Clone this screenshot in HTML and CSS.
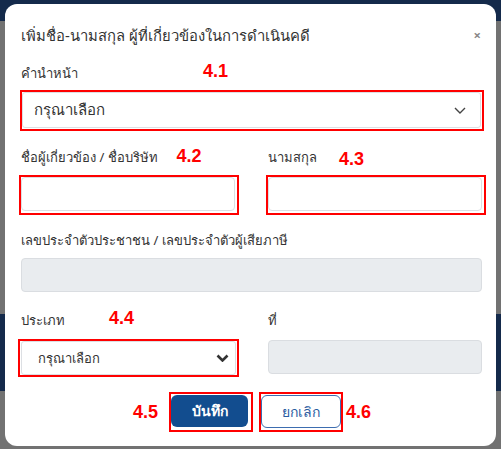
FILE: index.html
```html
<!DOCTYPE html>
<html lang="th">
<head>
<meta charset="utf-8">
<link rel="stylesheet" href="styles.css">
</head>
<body>
<div class="page">
  <div class="page-bar"></div>
  <div class="page-gap"></div>
  <div class="page-band"></div>
</div>
<div class="modal">
  <div class="modal-header">
    <h1 class="title">เพิ่มชื่อ-นามสกุล ผู้ที่เกี่ยวข้องในการดำเนินคดี</h1>
    <span class="close">×</span>
  </div>
  <div class="form">
    <div class="field">
      <div class="label-row"><span class="label">คำนำหน้า</span><span class="anno a41">4.1</span></div>
      <div class="mark mark-select-lg">
        <div class="select select-lg">
          <span>กรุณาเลือก</span>
          <svg class="chev-thin" width="12" height="7" viewBox="0 0 12 7"><path d="M1 1l5 5 5-5" fill="none" stroke="#444" stroke-width="1.4"/></svg>
        </div>
      </div>
    </div>
    <div class="row row-names">
      <div class="field">
        <div class="label-row"><span class="label">ชื่อผู้เกี่ยวข้อง / ชื่อบริษัท</span><span class="anno a42">4.2</span></div>
        <div class="mark mark-input"><div class="input"></div></div>
      </div>
      <div class="field">
        <div class="label-row"><span class="label">นามสกุล</span><span class="anno a43">4.3</span></div>
        <div class="mark mark-input"><div class="input"></div></div>
      </div>
    </div>
    <div class="field field-id">
      <div class="label-row"><span class="label">เลขประจำตัวประชาชน / เลขประจำตัวผู้เสียภาษี</span></div>
      <div class="input disabled id-input"></div>
    </div>
    <div class="row row-type">
      <div class="field">
        <div class="label-row"><span class="label">ประเภท</span><span class="anno a44">4.4</span></div>
        <div class="mark mark-select-sm">
          <div class="select select-sm">
            <span>กรุณาเลือก</span>
            <svg class="chev-bold" width="13" height="8" viewBox="0 0 13 8"><path d="M1.5 1.5l5 5 5-5" fill="none" stroke="#333" stroke-width="2.6"/></svg>
          </div>
        </div>
      </div>
      <div class="field">
        <div class="label-row"><span class="label">ที่</span></div>
        <div class="input disabled no-input"></div>
      </div>
    </div>
  </div>
  <div class="footer">
    <span class="anno a45">4.5</span>
    <span class="mark mark-save"><span class="btn btn-primary">บันทึก</span></span>
    <span class="mark mark-cancel"><span class="btn btn-outline">ยกเลิก</span></span>
    <span class="anno a46">4.6</span>
  </div>
</div>
</body>
</html>
```
FILE: styles.css
```css
* { box-sizing: border-box; }
html, body { margin: 0; padding: 0; }
body {
  width: 501px;
  height: 449px;
  overflow: hidden;
  background: #727272;
  font-family: "Noto Sans", "DejaVu Sans", sans-serif;
  color: #333;
}
.page { display: flex; flex-direction: column; }
.page-bar { height: 21px; background: #142a4b; }
.page-gap { height: 293px; }
.page-band { height: 77px; background: #142a4b; }

.modal {
  position: absolute;
  top: 4px;
  left: 5px;
  width: 491px;
  height: 442px;
  background: #fff;
  border-radius: 12px;
  padding: 0 14px 0 16px;
  display: flex;
  flex-direction: column;
}
.modal-header {
  display: flex;
  align-items: center;
  justify-content: space-between;
  height: 58px;
  padding-top: 4px;
}
.title {
  margin: 0;
  font-size: 14.8px;
  font-weight: 400;
  color: #333;
  line-height: 24px;
}
.close {
  font-size: 13px;
  font-weight: 700;
  color: #888;
  margin-right: 1px;
  line-height: 1;
}
.form { display: flex; flex-direction: column; }
.row {
  display: grid;
  grid-template-columns: 214px 214px;
  column-gap: 33px;
}
.field { display: flex; flex-direction: column; }
.label-row {
  display: flex;
  align-items: center;
  height: 22px;
}
.label { font-size: 13px; color: #333; }
.anno {
  font-family: "Liberation Sans", Arial, sans-serif;
  font-weight: 700;
  font-size: 18px;
  color: #f00;
  line-height: 1;
}
.a41 { margin-left: 125px; margin-top: -4px; }
.a42 { margin-left: 19px; margin-top: -2px; }
.a43 { margin-left: 22px; margin-top: 4px; }
.a44 { margin-left: 44px; margin-top: -4px; }

.mark { border: 2px solid #f00; display: flex; }

.mark-select-lg {
  margin: 6px -2px 0 -1px;
  padding: 0 1px 1px 0;
}
.row-names { margin-top: 15px; }
.mark-input {
  margin: 7px -4px 0 -2px;
  padding: 0 2px 2px 0;
}
.field-id { margin-top: 14px; }
.id-input { margin-top: 7px; height: 35px; }
.row-type { margin-top: 17px; }
.mark-select-sm {
  margin: 8px -4px 0 -3px;
  padding: 0 1px 0 1px;
}
.no-input { margin-top: 9px; height: 34px; }

.select {
  flex: 1;
  display: flex;
  align-items: center;
  justify-content: space-between;
  background: #fff;
  border: 1px solid #dcdfe3;
  border-radius: 3px;
}
.select-lg {
  height: 36px;
  padding: 0 14px 0 11px;
  font-size: 15px;
  color: #333;
}
.select-sm {
  height: 34px;
  padding: 0 6px 0 16px;
  font-size: 13px;
  color: #333;
}
.input {
  flex: 1;
  height: 34px;
  border: 1px solid #dcdfe3;
  border-radius: 4px;
  background: #fff;
}
.input.disabled {
  flex: none;
  background: #e9ecef;
  border-color: #dadde1;
}

.footer {
  display: flex;
  align-items: center;
  margin-top: 15px;
}
.a45 { margin-left: 112px; margin-right: 11px; }
.mark-save { padding: 1px 3px 3px 0; }
.mark-cancel { margin-left: 6px; padding: 1px 0 2px 0; }
.a46 { margin-left: 3px; }
.btn {
  display: flex;
  align-items: center;
  justify-content: center;
  width: 77px;
  height: 32px;
  border-radius: 6px;
  font-size: 14px;
}
.btn-primary { background: #124d8f; color: #fff; font-weight: 600; }
.btn-outline { background: #fff; color: #2a5b9f; border: 1px solid #3d6db0; width: 80px; height: 33px; }
```
